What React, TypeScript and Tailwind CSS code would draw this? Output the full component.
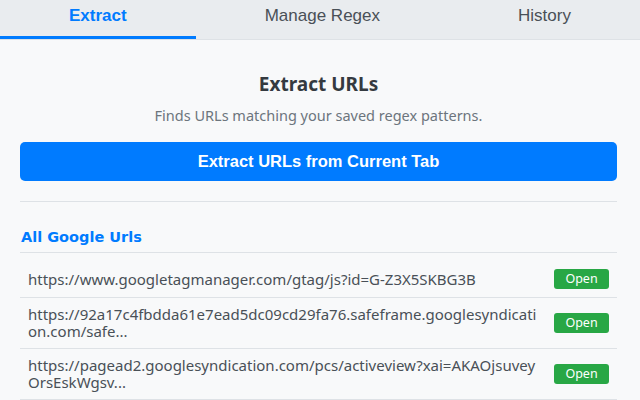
import { useState } from "react";

const TABS = ["Extract", "Manage Regex", "History"];

const URLS = [
    "https://www.googletagmanager.com/gtag/js?id=G-Z3X5SKBG3B",
    "https://92a17c4fbdda61e7ead5dc09cd29fa76.safeframe.googlesyndication.com/safeframe/1-0-40/html/container.html",
    "https://pagead2.googlesyndication.com/pcs/activeview?xai=AKAOjsuveyOrsEskWgsvQx7bN2",
];

// long urls get cut like the extension does
const short = (u: string) => (u.length > 80 ? u.slice(0, 77) + "..." : u);

export default function App() {
    const [tab, setTab] = useState("Extract");

    return (
        <div className="h-[400px] w-[640px] overflow-hidden bg-[#f8f9fa] font-['Noto_Sans',sans-serif] text-[#212529]">
            {/* tabs */}
            <div className="flex h-10 border-b border-[#dee2e6] bg-[#e9ecef]">
                {TABS.map((t) => (
                    <button
                        key={t}
                        onClick={() => setTab(t)}
                        className={
                            "flex-auto border-b-[3px] pb-[5px] font-['Liberation_Sans',Arial,sans-serif] text-[17px] " +
                            (tab === t ? "border-[#007bff] font-bold text-[#007bff]" : "border-transparent text-[#495057]")
                        }
                    >
                        {t}
                    </button>
                ))}
            </div>

            <div className="pl-5 pr-[23px]">
                <h2 className="mt-[32px] text-center text-[19px] font-bold leading-6 text-[#343a40]">Extract URLs</h2>
                <p className="mt-[9px] text-center text-[14.5px] leading-5 text-[#6c757d]">Finds URLs matching your saved regex patterns.</p>
                <button className="mt-[17px] h-[39px] w-full rounded-[5px] bg-[#007bff] font-['Liberation_Sans',Arial,sans-serif] text-[16.5px] font-bold text-white">
                    Extract URLs from Current Tab
                </button>

                <div className="mt-5 border-t border-[#dee2e6] pt-[24px]">
                    <h3 className="border-b border-[#dee2e6] pb-[4px] pl-px font-['DejaVu_Sans',sans-serif] text-[14.5px] font-bold leading-[22px] text-[#007bff]">All Google Urls</h3>
                    <ul className="mt-2">
                        {URLS.map((u) => (
                            <li key={u} className="flex items-center justify-between border-b border-[#dee2e6] px-2 py-2">
                                <span className="w-[512px] break-all text-[15px] leading-[17px] text-[#495057]">{short(u)}</span>
                                <button className="h-5 w-[55px] shrink-0 rounded-[3px] bg-[#28a745] text-[12.5px] text-white">Open</button>
                            </li>
                        ))}
                    </ul>
                </div>
            </div>
        </div>
    );
}
